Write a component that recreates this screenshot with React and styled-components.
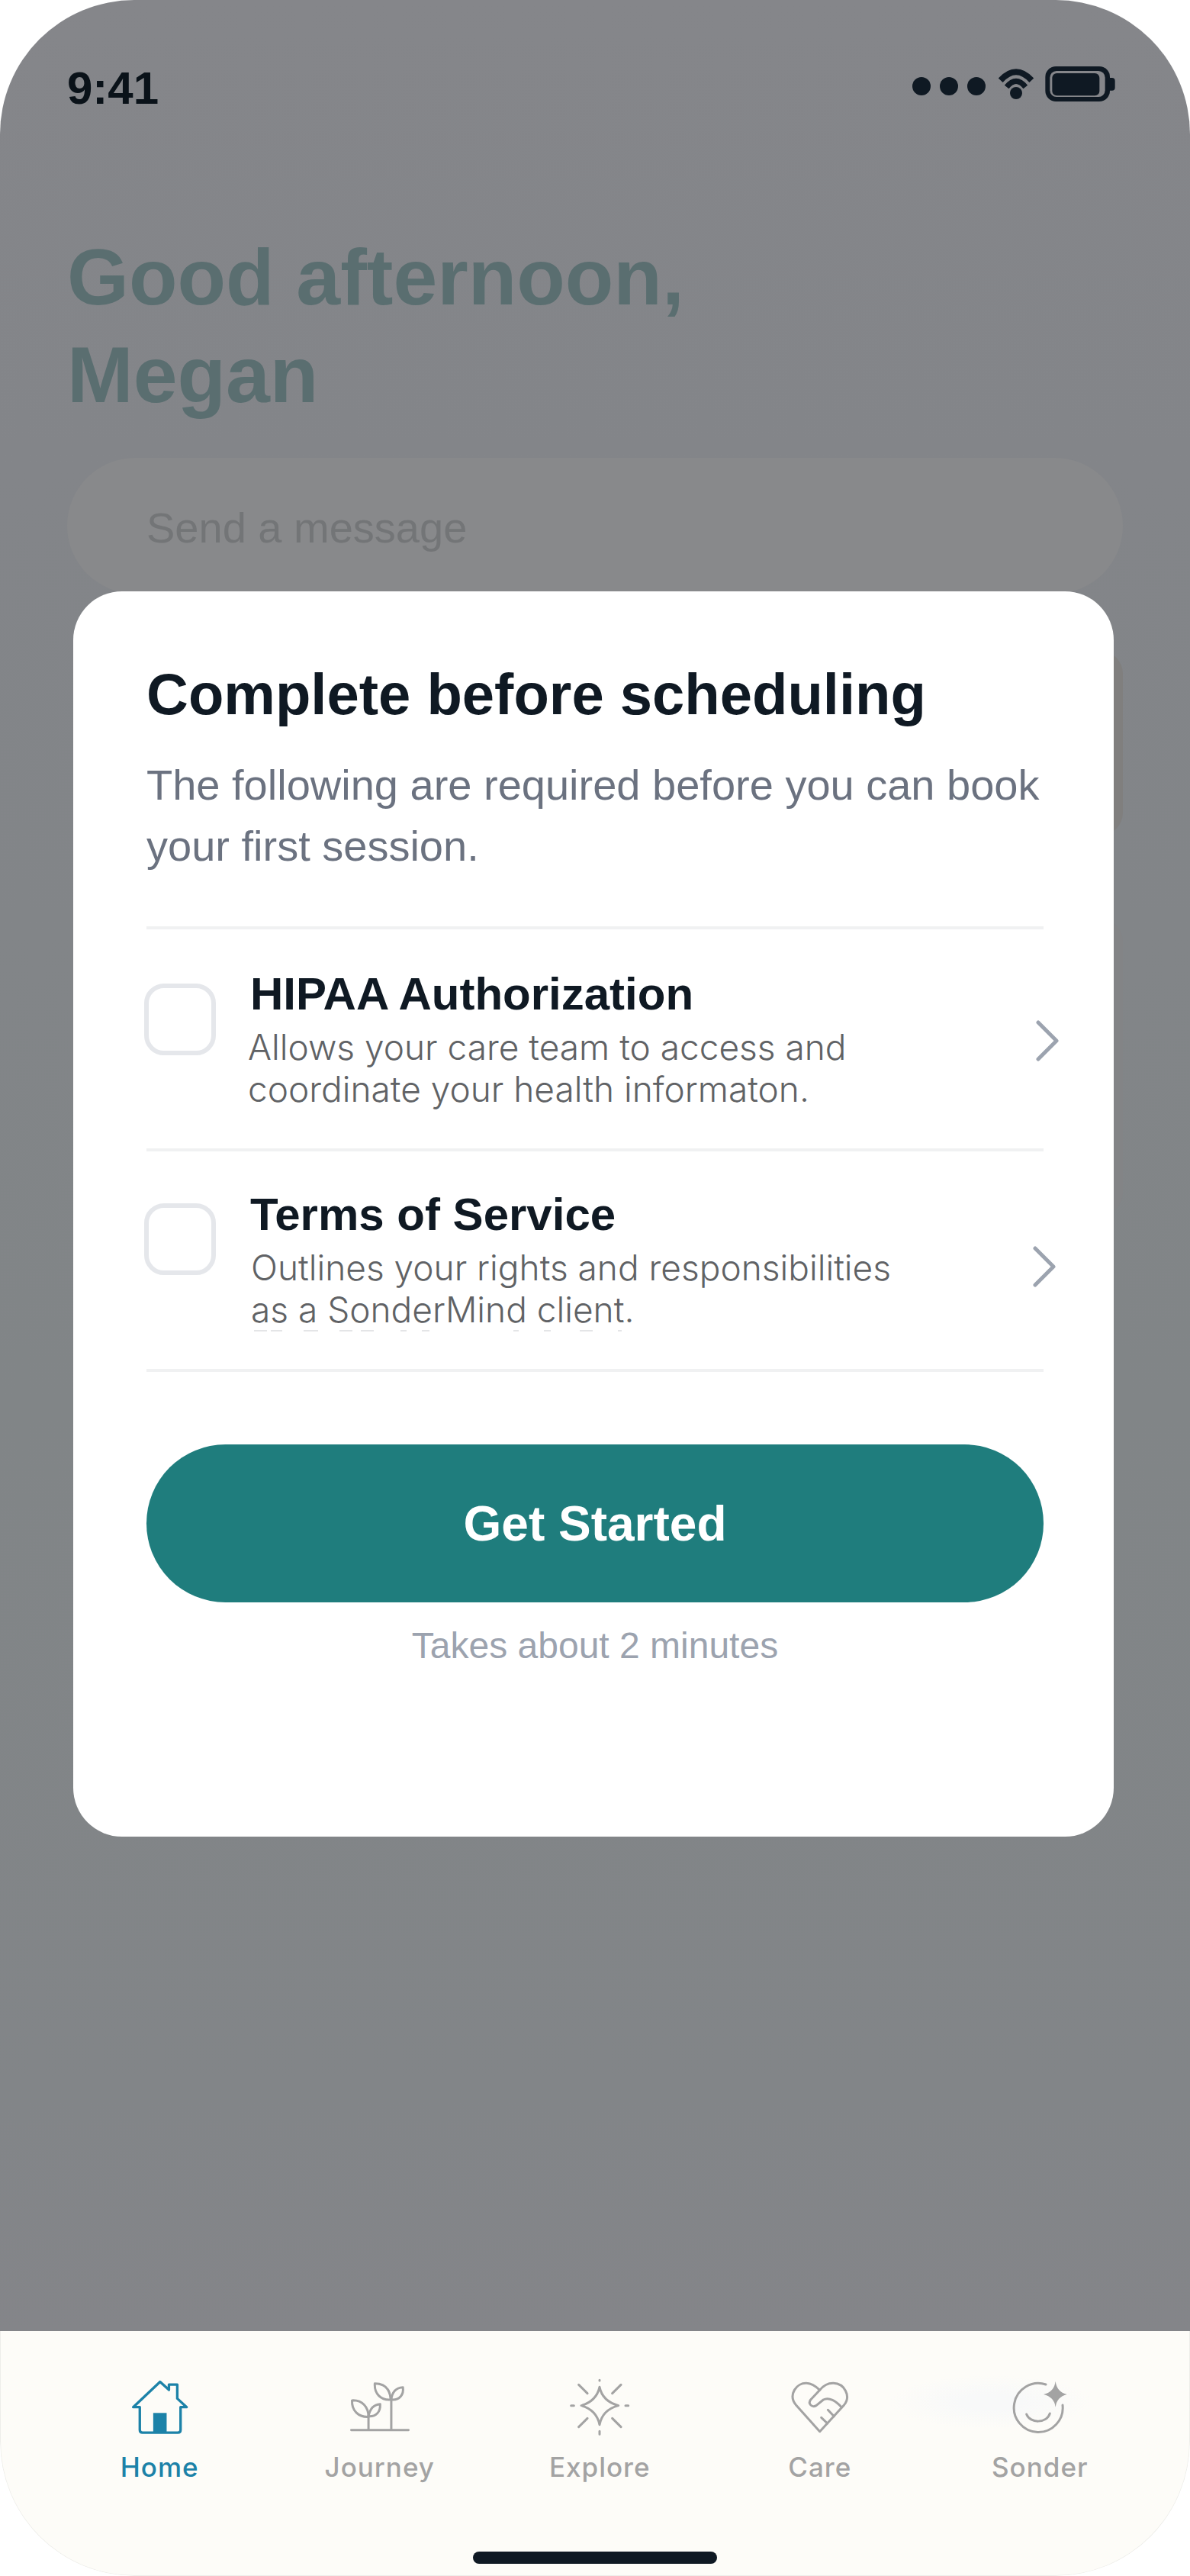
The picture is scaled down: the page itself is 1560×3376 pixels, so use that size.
import React from "react";
import styled, { createGlobalStyle } from "styled-components";

const Global = createGlobalStyle`
  html, body { margin: 0; padding: 0; background: #fff; }
  * { box-sizing: border-box; }
`;

const Phone = styled.div`
  position: relative;
  width: 1560px;
  height: 3376px;
  border-radius: 176px;
  overflow: hidden;
  display: flex;
  flex-direction: column;
  font-family: "Liberation Sans", Arial, sans-serif;
`;

const Screen = styled.main`
  flex: 1;
  display: flex;
  flex-direction: column;
  padding: 0 88px;
  background: linear-gradient(180deg, #85868a 0%, #838589 20%, #818587 60%, #828588 90%, #848589 100%);
`;

const StatusBar = styled.div`
  height: 174px;
  display: flex;
  align-items: flex-start;
  justify-content: space-between;
  padding-top: 81px;
`;

const Clock = styled.span`
  font-size: 60px;
  line-height: 69px;
  font-weight: 700;
  color: #0a1219;
`;

const StatusIcons = styled.div`
  display: flex;
  align-items: flex-start;
  margin-top: 6px;
  margin-right: 10px;
  gap: 15px;
`;

const Dots = styled.div`
  display: flex;
  gap: 12px;
  margin-top: 14px;
  margin-right: 2px;
`;

const Dot = styled.span`
  width: 24px;
  height: 24px;
  border-radius: 50%;
  background: #0f1923;
`;

const WifiGlyph = styled.svg`
  margin-top: 3px;
`;

const Greeting = styled.h1`
  margin: 125px 0 0;
  font-size: 104px;
  line-height: 128px;
  font-weight: 700;
  color: #5a6e70;
`;

const MessageInput = styled.div`
  margin-top: 45px;
  height: 178px;
  border-radius: 89px;
  background: #88898b;
  padding: 59px 104px 0;
  font-size: 56px;
  line-height: 66px;
  color: #737577;
`;

const BackdropCard = styled.div`
  margin-top: ${(p) => p.$mt}px;
  margin-left: 40px;
  height: ${(p) => p.$height}px;
  border-radius: 30px;
  background: ${(p) => p.$bg};
`;

const Modal = styled.section`
  position: absolute;
  left: 96px;
  top: 775px;
  width: 1364px;
  height: 1632px;
  background: #fff;
  border-radius: 64px;
  padding: 91px 92px 0 96px;
  display: flex;
  flex-direction: column;
`;

const ModalTitle = styled.h2`
  margin: 0;
  font-size: 76px;
  line-height: 88px;
  font-weight: 700;
  color: #0f1923;
`;

const ModalText = styled.p`
  margin: 35px 0 0;
  font-size: 56px;
  line-height: 80px;
  color: #6b7280;
`;

const TaskRow = styled.div`
  position: relative;
  height: ${(p) => p.$height}px;
  border-top: 4px solid #f0f1f2;
  display: flex;
  align-items: flex-start;
  gap: 45px;
  padding-top: ${(p) => p.$pad}px;
  margin-top: ${(p) => p.$mt || 0}px;
`;

const Check = styled.div`
  flex: none;
  width: 94px;
  height: 94px;
  margin-left: -3px;
  border: 6px solid #e5e7eb;
  border-radius: 26px;
`;

const TaskBody = styled.div`
  display: flex;
  flex-direction: column;
  margin-top: ${(p) => p.$mt}px;
`;

const TaskTitle = styled.div`
  font-size: 60px;
  line-height: 68px;
  font-weight: 700;
  color: #0f1923;
`;

const TaskText = styled.div`
  font-family: Inter, "Noto Sans", sans-serif;
  font-weight: 300;
  font-size: 46px;
  line-height: 55px;
  color: #606265;
  white-space: nowrap;
  margin-top: 8px;
  margin-left: ${(p) => p.$ml}px;
`;

const ClippedLine = styled.svg`
  display: block;
  margin-top: -1px;
  margin-left: -8px;
`;

const Chevron = styled.svg`
  position: absolute;
  right: ${(p) => p.$right}px;
  top: ${(p) => p.$top}px;
`;

const EndRule = styled.div`
  height: 4px;
  background: #f0f1f2;
`;

const Primary = styled.button`
  margin-top: 95px;
  height: 207px;
  border: 0;
  border-radius: 104px;
  background: #1f7d7d;
  color: #fff;
  font-family: inherit;
  font-size: 64px;
  font-weight: 700;
`;

const Hint = styled.div`
  margin-top: 29px;
  text-align: center;
  font-size: 48px;
  line-height: 56px;
  color: #9ca3af;
`;

const Nav = styled.nav`
  position: relative;
  height: 321px;
  background: #fdfcf8;
  border: 1px solid #eeeeea;
  border-top: 0;
  border-radius: 0 0 176px 176px;
  display: grid;
  grid-template-columns: repeat(5, 288.5px);
  padding: 60px 0 0 64px;
`;

const NavGlow = styled.div`
  position: absolute;
  left: 1165px;
  top: 58px;
  width: 265px;
  height: 70px;
  background: radial-gradient(closest-side, #f8f9f9 30%, rgba(248, 249, 249, 0) 100%);
`;

const NavItem = styled.div`
  position: relative;
  display: flex;
  flex-direction: column;
  align-items: center;
  color: ${(p) => (p.$active ? "#1c82a8" : "#a3a3a3")};
`;

const NavIconBox = styled.div`
  height: 80px;
  display: flex;
  align-items: center;
  justify-content: center;
`;

const NavLabel = styled.span`
  margin-top: 17px;
  font-family: Inter, "Noto Sans", sans-serif;
  font-weight: 500;
  font-size: 35px;
  line-height: 42px;
  letter-spacing: 1px;
`;

const HomeBar = styled.div`
  position: absolute;
  left: 619px;
  bottom: 15px;
  width: 320px;
  height: 16px;
  border-radius: 8px;
  background: #0f1923;
`;

const Wifi = () => (
  <WifiGlyph width="46" height="40" viewBox="628 120 138 120" fill="none">
    <path d="M636 166Q697 100 758 166" stroke="#0f1923" strokeWidth="24" />
    <path d="M660 192Q697 146 734 192" stroke="#0f1923" strokeWidth="22" />
    <circle cx="697" cy="216" r="24" fill="#0f1923" />
  </WifiGlyph>
);

const Battery = () => (
  <svg width="92" height="46" viewBox="808 110 274 138">
    <rect x="808" y="110" width="254" height="138" rx="42" fill="#0f1923" />
    <rect x="826" y="128" width="217" height="102" rx="26" fill="#85868a" />
    <rect x="835" y="137" width="186" height="88" rx="18" fill="#0f1923" />
    <path d="M1062 155h8a12 12 0 0 1 12 12v26a12 12 0 0 1-12 12h-8z" fill="#0f1923" />
  </svg>
);

const RowChevron = ({ right, top }) => (
  <Chevron $right={right} $top={top} width="30" height="54" viewBox="0 0 30 54" fill="none">
    <path d="M3 3L27 27L3 51" stroke="#9ca3af" strokeWidth="5" strokeLinecap="round" strokeLinejoin="round" />
  </Chevron>
);

const line = { fill: "none", stroke: "currentColor", strokeWidth: 9, strokeLinecap: "round", strokeLinejoin: "round" };

const HomeIcon = () => (
  <svg width="77" height="74" viewBox="120 80 232 222">
    <path
      {...line}
      strokeWidth="10"
      d="M237 90L272 122V101H305V156L342 190H318V280Q318 291 307 291H168Q157 291 157 280V190H131Z"
    />
    <rect x="210" y="213" width="53" height="78" fill="currentColor" />
  </svg>
);

const JourneyIcon = () => (
  <svg width="80" height="68" viewBox="115 80 240 205">
    <g {...line}>
      <path d="M122 272H348M280 272V150M190 272V215" />
      <path d="M215 88C255 88 275 110 278 152C240 155 212 130 215 88Z" />
      <path d="M280 152C283 125 295 105 326 103C330 130 315 155 280 152Z" />
      <path d="M125 155C165 153 190 180 190 220C150 222 123 195 125 155Z" />
      <path d="M190 218C195 190 210 172 236 170C238 200 220 220 190 218Z" />
    </g>
  </svg>
);

const ExploreIcon = () => (
  <svg width="80" height="76" viewBox="975 76 238 228">
    <g {...line}>
      <path d="M1094 110Q1105 165 1168 183Q1105 200 1094 258Q1082 200 1022 183Q1082 165 1094 110Z" />
      <path d="M1094 83V85M1094 284V296M982 183H993M1196 183H1207" />
      <path d="M1012 101L1046 135M1178 101L1144 135M1012 267L1046 233M1178 267L1144 233" />
    </g>
  </svg>
);

const CareIcon = () => (
  <svg width="76" height="68" viewBox="113 88 228 204">
    <g {...line}>
      <path d="M226 285L132 180C100 140 135 92 175 95C197 96 213 110 226 122C240 105 255 94 280 95C322 96 350 145 322 180Z" />
      <path d="M226 122L190 160C178 176 196 192 212 183L240 160C262 148 290 165 312 190" />
      <path d="M258 200L282 225M232 230L256 253" />
    </g>
  </svg>
);

const SonderIcon = () => (
  <svg width="72" height="70" viewBox="980 86 216 210">
    <g {...line}>
      <path d="M1112 101A96 96 0 1 0 1178 182" />
      <path d="M1036 218C1050 255 1115 255 1128 215" />
    </g>
    <path d="M1150 88Q1155 130 1195 140Q1155 150 1150 190Q1145 150 1103 140Q1145 130 1150 88Z" fill="currentColor" />
  </svg>
);

const tabs = [
  { label: "Home", Icon: HomeIcon, active: true },
  { label: "Journey", Icon: JourneyIcon },
  { label: "Explore", Icon: ExploreIcon },
  { label: "Care", Icon: CareIcon },
  { label: "Sonder", Icon: SonderIcon },
];

export default function App() {
  return (
    <>
      <Global />
      <Phone>
        <Screen>
          <StatusBar>
            <Clock>9:41</Clock>
            <StatusIcons>
              <Dots>
                <Dot />
                <Dot />
                <Dot />
              </Dots>
              <Wifi />
              <Battery />
            </StatusIcons>
          </StatusBar>
          <Greeting>
            Good afternoon,
            <br />
            Megan
          </Greeting>
          <MessageInput>Send a message</MessageInput>
          <BackdropCard $mt={75} $height={242} $bg="#807f7e" />
          <BackdropCard $mt={109} $height={389} $bg="#838486" />
        </Screen>

        <Modal>
          <ModalTitle>Complete before scheduling</ModalTitle>
          <ModalText>
            The following are required before you can book
            <br />
            your first session.
          </ModalText>
          <TaskRow $height={291} $mt={65} $pad={71}>
            <Check />
            <TaskBody $mt={-20}>
              <TaskTitle>HIPAA Authorization</TaskTitle>
              <TaskText $ml={-3}>
                Allows your care team to access and
                <br />
                coordinate your health informaton.
              </TaskText>
            </TaskBody>
            <RowChevron right={-20} top={119} />
          </TaskRow>
          <TaskRow $height={289} $pad={68}>
            <Check />
            <TaskBody $mt={-19}>
              <TaskTitle>Terms of Service</TaskTitle>
              <TaskText $ml={1}>
                Outlines your rights and responsibilities
                <br />
                as a SonderMind client.
              </TaskText>
              <ClippedLine width="520" height="2" viewBox="0 0 520 2">
                <path
                  d="M13 1H30M35 1H50M78 1H97M125 1H142M153 1H170M205 1H213M233 1H243M353 1H360M393 1H402M440 1H457M490 1H495"
                  stroke="#dcdddf"
                  strokeWidth="1.5"
                />
              </ClippedLine>
            </TaskBody>
            <RowChevron right={-16} top={124} />
          </TaskRow>
          <EndRule />
          <Primary>Get Started</Primary>
          <Hint>Takes about 2 minutes</Hint>
        </Modal>

        <Nav>
          <NavGlow />
          {tabs.map(({ label, Icon, active }) => (
            <NavItem key={label} $active={active}>
              <NavIconBox>
                <Icon />
              </NavIconBox>
              <NavLabel>{label}</NavLabel>
            </NavItem>
          ))}
          <HomeBar />
        </Nav>
      </Phone>
    </>
  );
}
